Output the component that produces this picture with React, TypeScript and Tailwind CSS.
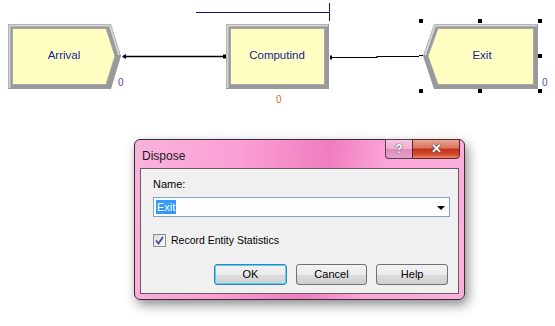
import React from "react";

const font = { fontFamily: '"Liberation Sans", Arial, sans-serif' };

type ModuleProps = {
  outer: string;
  inner: string;
  light: string;
  label: string;
  cx: number;
};

const Module: React.FC<ModuleProps> = ({ outer, inner, light, label, cx }) => (
  <g>
    <polygon points={outer} fill="#999999" />
    <polyline points={light} fill="none" stroke="#d4d4d4" strokeWidth={2} />
    <polygon points={inner} fill="#ffffc4" stroke="#a8a8a8" strokeWidth={1} />
    <text x={cx} y={59} textAnchor="middle" fontSize={11.5} fill="#1a1a96" style={font}>
      {label}
    </text>
  </g>
);

const Diagram = () => (
  <svg width={555} height={110} className="block">
    {/* top blue line */}
    <line x1={196} y1={12.5} x2={329} y2={12.5} stroke="#10108a" strokeWidth={1} />
    <line x1={329.5} y1={3} x2={329.5} y2={21} stroke="#10108a" strokeWidth={1} />

    <Module
      outer="8,24 111,24 121,56 111,89 8,89"
      light="9.5,88 9.5,25.5 110,25.5 119,55"
      inner="12.5,28.5 106,28.5 115,56 106,84.5 12.5,84.5"
      label="Arrival"
      cx={64}
    />
    <Module
      outer="226,24 329,24 329,89 226,89"
      light="227.5,88 227.5,25.5 328,25.5"
      inner="230.5,28.5 324.5,28.5 324.5,84.5 230.5,84.5"
      label="Computind"
      cx={277}
    />
    <Module
      outer="423,56 434,24 538,24 538,89 434,89"
      light="425,55 435,25.5 537,25.5"
      inner="428,56 438,28.5 533.5,28.5 533.5,84.5 438,84.5"
      label="Exit"
      cx={482}
    />

    {/* connectors */}
    <line x1={123} y1={56.5} x2={224} y2={56.5} stroke="#000" strokeWidth={1.3} />
    <polygon points="122,56.5 126,54 126,59" fill="#000" />
    <rect x={223} y={54.5} width={3} height={4} fill="#000" />

    <polyline points="331,57.5 377,57.5 377,56.5 419,56.5" fill="none" stroke="#000" strokeWidth={1.2} />
    <rect x={330} y={55.5} width={2} height={4} fill="#000" />
    <line x1={419} y1={55.5} x2={423} y2={55.5} stroke="#000" strokeWidth={1} />

    {/* counters */}
    <text x={118} y={86} fontSize={10} fill="#6a3ab8" style={font}>0</text>
    <text x={276} y={103} fontSize={10} fill="#d8682a" style={font}>0</text>
    <text x={542} y={86} fontSize={10} fill="#3a58d0" style={font}>0</text>

    {/* selection handles */}
    {[
      [421, 21],
      [480, 21],
      [540, 21],
      [540, 56],
      [421, 91],
      [480, 91],
      [540, 91],
    ].map(([x, y]) => (
      <rect key={`${x}-${y}`} x={x - 2} y={y - 2} width={4} height={4} fill="#000" />
    ))}
  </svg>
);

const Btn: React.FC<{ label: string; def?: boolean; w: string }> = ({ label, def, w }) => (
  <div
    className={`${w} h-[21px] rounded-[3px] border ${
      def ? "border-[#3c7fb1] shadow-[inset_0_0_0_1px_#48d8fb]" : "border-[#707070]"
    } bg-[linear-gradient(#f2f2f2_0%,#ebebeb_50%,#dddddd_51%,#cfcfcf_100%)] flex items-center justify-center text-[11px] text-black`}
  >
    {label}
  </div>
);

const Dialog = () => (
  <div
    className="ml-[134px] mt-[29px] w-[331px] h-[161px] rounded-[6px] border border-[#3b2a35] shadow-[3px_5px_12px_rgba(0,0,0,0.45)] bg-[linear-gradient(100deg,#f9b3dc_0%,#fb9fd4_30%,#ef7dc0_55%,#fca6d9_72%,#f9b0dc_100%)] flex flex-col relative"
    style={font}
  >
    {/* title bar */}
    <div className="h-[28px] flex items-start">
      <div className="pl-[7px] pt-[7px] text-[12px] text-[#1a1a1a]">Dispose</div>
      <div className="ml-auto mr-[4px] flex -mt-px">
        <div className="w-[27px] h-[20px] rounded-bl-[4px] border border-[#5a3c50] border-r-0 bg-[linear-gradient(#f6c4e0_0%,#eeaed2_50%,#de8cba_51%,#e6a2c8_100%)] flex items-center justify-center text-[13px] font-bold text-white [text-shadow:0_0_1px_#333,0_0_1px_#333]">
          ?
        </div>
        <div className="w-[48px] h-[20px] rounded-br-[4px] border border-[#5a2828] bg-[linear-gradient(#e8a493_0%,#d9725f_45%,#c3301d_50%,#d24a2e_80%,#e78a6e_100%)] flex items-center justify-center text-[13px] font-bold text-white [text-shadow:0_0_1px_#222,0_0_1px_#222]">
          ✕
        </div>
      </div>
    </div>

    {/* client area */}
    <div className="mx-[5px] mb-[5px] flex-1 border border-[#6a5a66] bg-[#f0f0f0] pl-[12px] pr-[10px] pt-[8px] text-[11px] text-black flex flex-col">
      <div className="h-[14px] leading-[14px]">Name:</div>
      <div className="mt-[6px] h-[20px] w-[297px] border border-[#7aa7cf] bg-white flex items-center pl-[2px] pr-[4px]">
        <span className="bg-[#3399ff] text-white px-[1px] leading-[14px]">Exit</span>
        <svg width={8} height={5} className="ml-auto mt-[2px]">
          <polygon points="0,0 8,0 4,4" fill="#000" />
        </svg>
      </div>
      <div className="mt-[16px] flex items-center gap-[5px]">
        <div className="w-[13px] h-[13px] border border-[#8f8f8f] bg-[linear-gradient(135deg,#dcdcdc,#fafafa)] flex items-center justify-center">
          <svg width={9} height={9}>
            <polyline points="1,4.5 3.5,7.5 8,1" fill="none" stroke="#3c4f8c" strokeWidth={1.8} />
          </svg>
        </div>
        <span className="text-[10.5px]">Record Entity Statistics</span>
      </div>
      <div className="mt-[15px] flex pl-[61px] gap-[9px]">
        <Btn label="OK" def w="w-[73px]" />
        <Btn label="Cancel" w="w-[72px]" />
        <Btn label="Help" w="w-[72px]" />
      </div>
    </div>
  </div>
);

export default function App() {
  return (
    <div className="w-[555px] h-[326px] bg-white overflow-hidden" style={font}>
      <Diagram />
      <Dialog />
    </div>
  );
}
